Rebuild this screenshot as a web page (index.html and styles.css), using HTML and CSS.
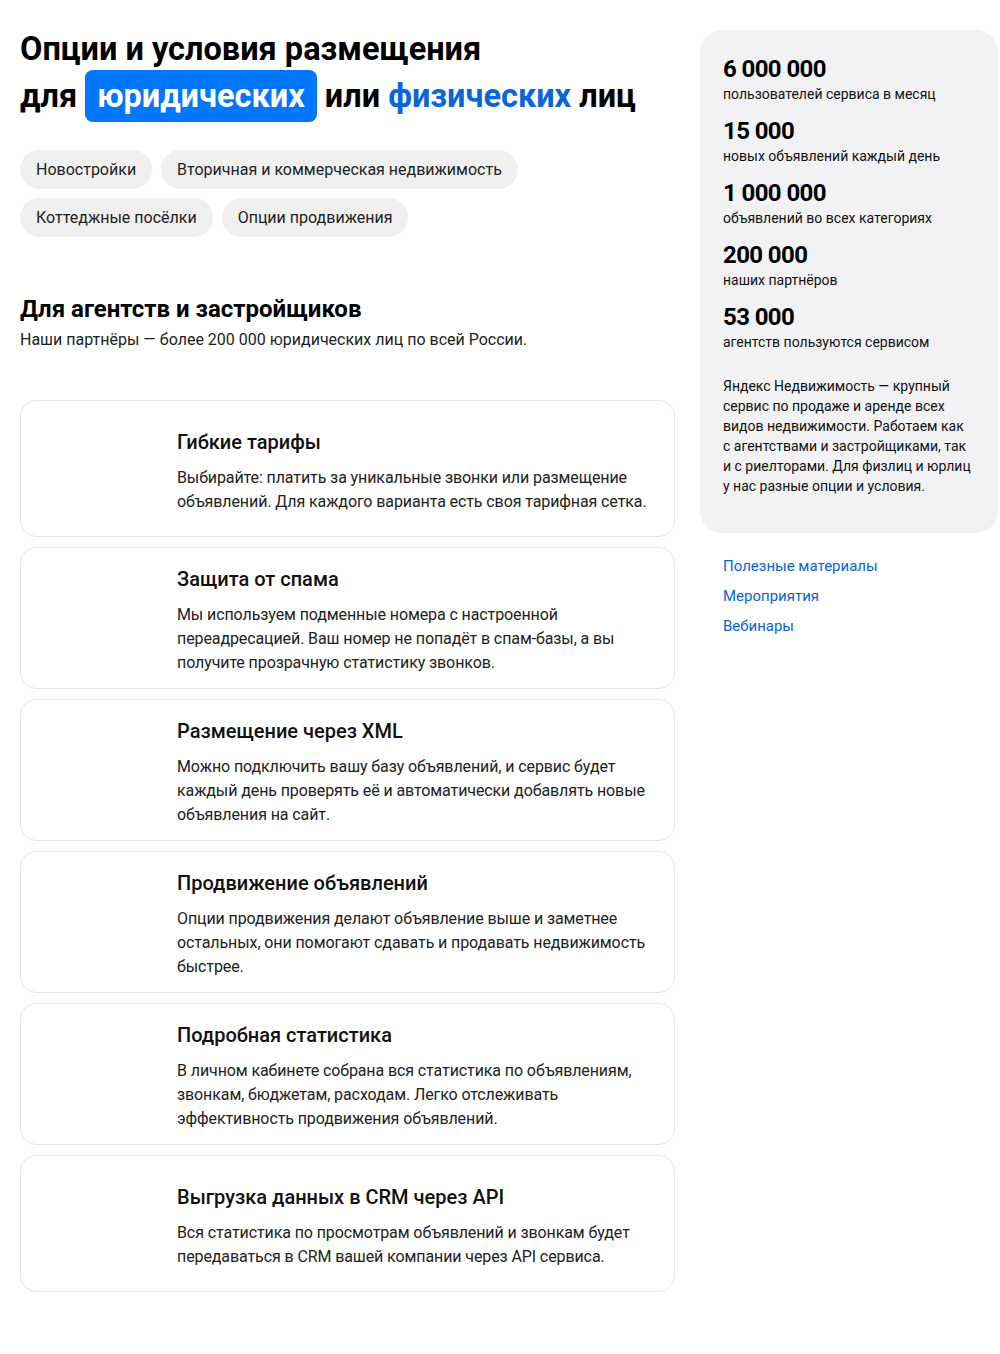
FILE: index.html
```html
<!DOCTYPE html>
<html lang="ru">
<head>
<meta charset="utf-8">
<title>Опции и условия размещения</title>
<link rel="stylesheet" href="styles.css">
</head>
<body>
<div class="page">
  <main class="main">
    <h1 class="title">Опции и условия размещения<br>для <span class="hl">юридических</span> или <span class="accent">физических</span> лиц</h1>
    <div class="chips">
      <span class="chip">Новостройки</span>
      <span class="chip">Вторичная и коммерческая недвижимость</span>
      <span class="chip">Коттеджные посёлки</span>
      <span class="chip">Опции продвижения</span>
    </div>
    <h2 class="section-title">Для агентств и застройщиков</h2>
    <p class="section-sub">Наши партнёры — более 200 000 юридических лиц по всей России.</p>
    <div class="cards">
      <div class="card"><div class="card-media"></div><div class="card-body"><h3 class="card-title">Гибкие тарифы</h3><p class="card-text">Выбирайте: платить за уникальные звонки или размещение объявлений. Для каждого варианта есть своя тарифная сетка.</p></div></div>
      <div class="card"><div class="card-media"></div><div class="card-body"><h3 class="card-title">Защита от спама</h3><p class="card-text">Мы используем подменные номера с настроенной переадресацией. Ваш номер не попадёт в спам-базы, а вы получите прозрачную статистику звонков.</p></div></div>
      <div class="card"><div class="card-media"></div><div class="card-body"><h3 class="card-title">Размещение через XML</h3><p class="card-text">Можно подключить вашу базу объявлений, и сервис будет каждый день проверять её и автоматически добавлять новые объявления на сайт.</p></div></div>
      <div class="card"><div class="card-media"></div><div class="card-body"><h3 class="card-title">Продвижение объявлений</h3><p class="card-text">Опции продвижения делают объявление выше и заметнее остальных, они помогают сдавать и продавать недвижимость быстрее.</p></div></div>
      <div class="card"><div class="card-media"></div><div class="card-body"><h3 class="card-title">Подробная статистика</h3><p class="card-text">В личном кабинете собрана вся статистика по объявлениям, звонкам, бюджетам, расходам. Легко отслеживать эффективность продвижения объявлений.</p></div></div>
      <div class="card"><div class="card-media"></div><div class="card-body"><h3 class="card-title">Выгрузка данных в CRM через API</h3><p class="card-text">Вся статистика по просмотрам объявлений и звонкам будет передаваться в CRM вашей компании через API сервиса.</p></div></div>
    </div>
  </main>
  <aside class="side">
    <div class="panel">
      <div class="stat"><div class="stat-num">6 000 000</div><div class="stat-label">пользователей сервиса в месяц</div></div>
      <div class="stat"><div class="stat-num">15 000</div><div class="stat-label">новых объявлений каждый день</div></div>
      <div class="stat"><div class="stat-num">1 000 000</div><div class="stat-label">объявлений во всех категориях</div></div>
      <div class="stat"><div class="stat-num">200 000</div><div class="stat-label">наших партнёров</div></div>
      <div class="stat"><div class="stat-num">53 000</div><div class="stat-label">агентств пользуются сервисом</div></div>
      <p class="panel-text">Яндекс Недвижимость — крупный сервис по продаже и аренде всех видов недвижимости. Работаем как с&nbsp;агентствами и застройщиками, так и&nbsp;с&nbsp;риелторами. Для физлиц и юрлиц у&nbsp;нас разные опции и условия.</p>
    </div>
    <nav class="links">
      <a class="link" href="#">Полезные материалы</a>
      <a class="link" href="#">Мероприятия</a>
      <a class="link" href="#">Вебинары</a>
    </nav>
  </aside>
</div>
</body>
</html>
```

FILE: styles.css
```css
* { box-sizing: border-box; }
html, body { margin: 0; padding: 0; background: #fff; }
body {
  font-family: Roboto, "Noto Sans", Arial, sans-serif;
  color: #1a1a1a;
}
.page {
  display: grid;
  grid-template-columns: 655px 298px;
  column-gap: 25px;
  padding: 0 0 0 20px;
  align-items: start;
}
.main { padding-top: 26px; }
.title {
  margin: 0;
  font-size: 32.5px;
  line-height: 47px;
  font-weight: 700;
  color: #000;
}
.hl {
  background: #0077ff;
  color: #fff;
  padding: 7px 12px;
  border-radius: 8px;
}
.accent { color: #0a66d8; }
.chips {
  display: flex;
  flex-wrap: wrap;
  gap: 9px;
  margin-top: 30px;
  width: 560px;
}
.chip {
  background: #f0f0f0;
  border-radius: 20px;
  height: 39px;
  line-height: 39px;
  padding: 0 16px;
  font-size: 16px;
  color: #222;
}
.section-title {
  margin: 56px 0 0;
  font-size: 24px;
  line-height: 32px;
  font-weight: 700;
  color: #000;
}
.section-sub {
  margin: 3px 0 0;
  font-size: 16px;
  line-height: 24px;
  color: #222;
}
.cards {
  margin-top: 48px;
  display: flex;
  flex-direction: column;
  gap: 10px;
  padding-bottom: 60px;
}
.card {
  display: flex;
  align-items: center;
  border: 1px solid #e6e6e6;
  border-radius: 16px;
  padding: 15px 10px 13px 0;
  min-height: 137px;
}
.card-media {
  flex: 0 0 156px;
  align-self: stretch;
}
.card-title {
  margin: 0;
  font-size: 20px;
  line-height: 32px;
  font-weight: 500;
  color: #111;
}
.card-text {
  margin: 8px 0 0;
  font-size: 16px;
  line-height: 24px;
  color: #222;
  letter-spacing: -0.1px;
}
.side { padding-top: 30px; }
.panel {
  background: #f2f2f4;
  border-radius: 22px;
  padding: 24px 23px 37px;
}
.stat + .stat { margin-top: 12px; }
.stat-num {
  font-size: 24px;
  line-height: 30px;
  font-weight: 700;
  color: #000;
  letter-spacing: -0.6px;
}
.stat-label {
  font-size: 14px;
  line-height: 20px;
  color: #111;
}
.panel-text {
  margin: 24px 0 0;
  font-size: 14px;
  line-height: 20px;
  color: #111;
}
.links {
  display: flex;
  flex-direction: column;
  padding: 18px 0 0 23px;
}
.link {
  font-size: 15px;
  line-height: 30px;
  color: #0a63d6;
  text-decoration: none;
}
```
